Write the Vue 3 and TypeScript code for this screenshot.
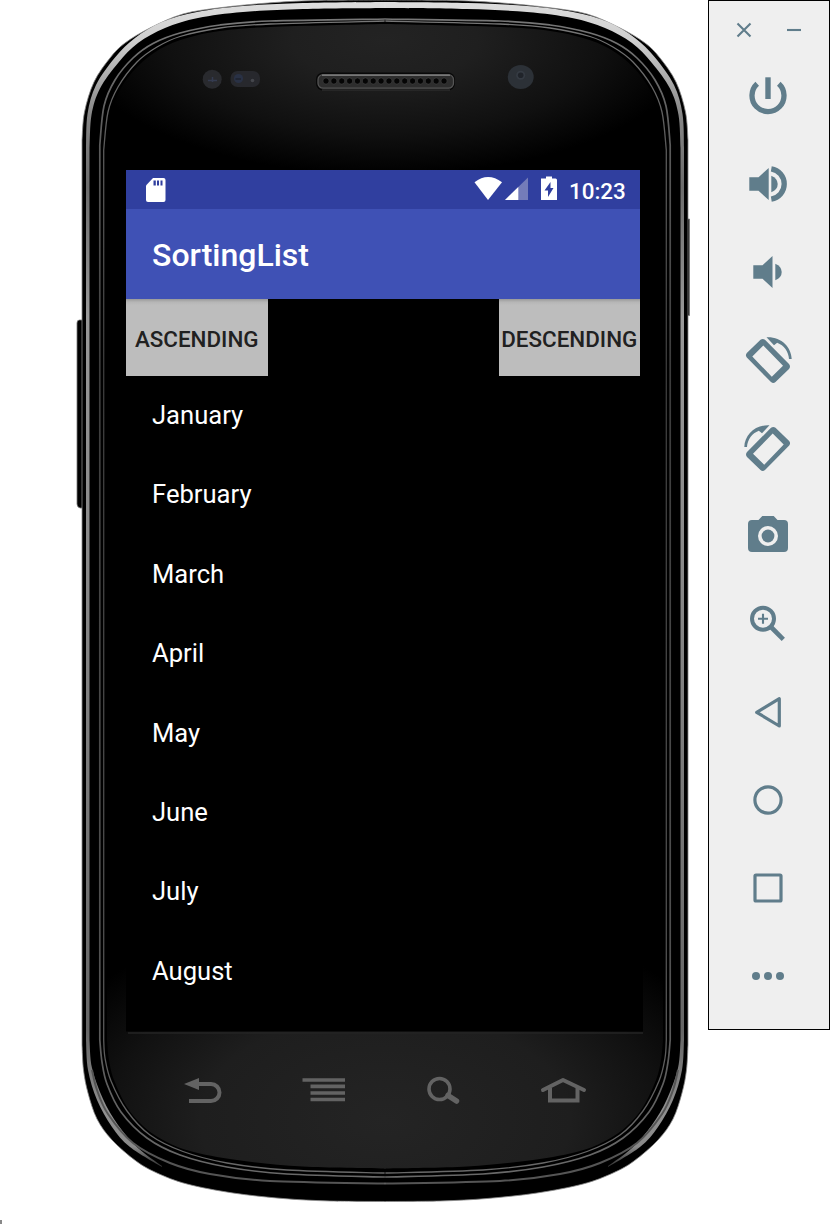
<script setup lang="ts">
type Point = [number, number]

const months: string[] = ['January', 'February', 'March', 'April', 'May', 'June', 'July', 'August']
const holes: number[] = Array.from({ length: 16 }, (_, i) => 326 + i * 7.87)

// Smooth curve through a list of points (Catmull-Rom converted to cubic Béziers).
function segments(points: Point[]): string {
  let d = ''
  for (let i = 0; i < points.length - 1; i++) {
    const p0 = points[Math.max(i - 1, 0)]
    const p1 = points[i]
    const p2 = points[i + 1]
    const p3 = points[Math.min(i + 2, points.length - 1)]
    const c1 = [p1[0] + (p2[0] - p0[0]) / 6, p1[1] + (p2[1] - p0[1]) / 6]
    const c2 = [p2[0] - (p3[0] - p1[0]) / 6, p2[1] - (p3[1] - p1[1]) / 6]
    d += `C${c1.join(' ')} ${c2.join(' ')} ${p2.join(' ')}`
  }
  return d
}
const line = (...runs: Point[][]): string =>
  'M' + runs[0][0].join(' ') + runs.map((r, i) => (i ? `L${r[0].join(' ')}` : '') + segments(r)).join('')

// Each outline describes the left half of the body; the right half is mirrored at x = 385.
const body = line(
  [[386, 0], [315, 0.5], [268, 3], [222, 7.5], [183, 14], [150, 28], [125, 43], [110, 58], [94, 82], [84.5, 112], [82, 140]],
  [[82, 1045], [83.5, 1070], [88, 1093], [97, 1119], [112, 1140], [136, 1161], [157, 1173], [187, 1184], [233, 1193], [283, 1198.5], [330, 1201], [386, 1201.5]],
)
const face = line(
  [[386, 24], [270, 27], [220, 31], [187, 38], [160, 49], [137, 67], [120, 90], [111, 117], [107, 150]],
  [[107, 1040], [109, 1060], [114, 1080], [127, 1107], [143, 1126], [163, 1140], [190, 1151], [237, 1160], [303, 1166.5], [386, 1168.5]],
)
const ringInner = line(
  [[386, 21], [270, 24], [220, 28], [180, 36.5], [157, 47], [137, 62], [118, 87], [108, 112], [103.7, 150]],
  [[103.7, 1040], [105, 1058], [111, 1081], [127, 1111], [150, 1135], [183, 1151.5], [227, 1163], [287, 1170], [386, 1173]],
)
const ringOuter = line(
  [[386, 19], [270, 21], [220, 25], [180, 33], [153, 43.5], [133, 58], [115, 80], [104, 106], [99.8, 145]],
  [[99.8, 1040], [102, 1062], [107, 1084], [121, 1112], [147, 1138], [180, 1155], [227, 1167], [287, 1174], [386, 1177]],
)
const lowerRing = line([[92, 1070], [97, 1090], [108, 1114], [133, 1143], [170, 1163], [210, 1174], [270, 1181], [386, 1183.5]])
const chrome = line(
  [[386, 2], [303, 3], [243, 6], [197, 12], [162, 22], [135, 38], [115, 57.5], [96, 85], [87.5, 114], [86, 148]],
  [[86, 1040], [88, 1070], [97, 1100], [112, 1127], [130, 1147], [162, 1167]],
  [[162, 1166], [138, 1148], [118, 1125], [103, 1099], [92, 1068], [89.5, 1040]],
  [[89.5, 148], [91.5, 115], [100, 88.5], [118.5, 62.5], [138, 43], [165, 28], [198, 18], [243, 12], [303, 9], [386, 8]],
) + 'Z'
</script>

<template>
  <main class="stage">
    <section class="phone">
      <svg class="bezel" width="708" height="1224" viewBox="0 0 708 1224" aria-hidden="true">
        <defs>
          <linearGradient id="chromeFill" gradientUnits="userSpaceOnUse" x1="0" y1="0" x2="0" y2="1170">
            <stop offset="0" stop-color="#dedede" />
            <stop offset=".035" stop-color="#cfcfcf" />
            <stop offset=".1" stop-color="#858585" />
            <stop offset=".16" stop-color="#6c6c6c" />
            <stop offset=".27" stop-color="#999" />
            <stop offset=".6" stop-color="#808080" />
            <stop offset=".88" stop-color="#666" />
            <stop offset=".95" stop-color="#909090" />
            <stop offset=".98" stop-color="#8a8a8a" />
            <stop offset="1" stop-color="#222" />
          </linearGradient>
          <linearGradient id="ringFill" gradientUnits="userSpaceOnUse" x1="0" y1="18" x2="0" y2="1180">
            <stop offset="0" stop-color="#777" />
            <stop offset=".1" stop-color="#5c5c5c" />
            <stop offset=".3" stop-color="#3c3c3c" />
            <stop offset=".8" stop-color="#505050" />
            <stop offset="1" stop-color="#6a6a6a" />
          </linearGradient>
          <radialGradient id="topGlow" gradientUnits="userSpaceOnUse" cx="0" cy="0" r="1" gradientTransform="translate(385 40) scale(310 135)">
            <stop offset="0" stop-color="#232323" />
            <stop offset=".3" stop-color="#1f1f1f" />
            <stop offset=".7" stop-color="#101010" />
            <stop offset="1" stop-color="#000" />
          </radialGradient>
          <radialGradient id="bottomGlow" gradientUnits="userSpaceOnUse" cx="0" cy="0" r="1" gradientTransform="translate(385 1120) scale(370 215)">
            <stop offset="0" stop-color="#242424" />
            <stop offset=".5" stop-color="#1e1e1e" />
            <stop offset=".75" stop-color="#111" />
            <stop offset="1" stop-color="#000" />
          </radialGradient>
          <clipPath id="faceClip">
            <path :d="face" />
            <path :d="face" transform="translate(770) scale(-1 1)" />
          </clipPath>
          <g id="half">
            <path :d="body" fill="#000" stroke="#8a8a8a" stroke-width=".8" />
            <path :d="chrome" fill="url(#chromeFill)" />
            <path :d="ringOuter" fill="#000" stroke="url(#ringFill)" stroke-width="1.7" />
            <path :d="ringInner" fill="#000" stroke="url(#ringFill)" stroke-width="1.3" />
            <path :d="lowerRing" fill="none" stroke="#555" stroke-width="2" />
          </g>
        </defs>
        <path d="M83 320H79.500Q77 320 77 323V504Q77 507 80 508H83Z" fill="#000" stroke="#777" stroke-width=".8" />
        <path d="M687 219H689.500V315.500H687Z" fill="#000" stroke="#777" stroke-width=".8" />
        <use href="#half" />
        <use href="#half" transform="translate(770) scale(-1 1)" />
        <path d="M384 1H386V1201H384Z" fill="#000" />
        <path d="M384 2H386V8H384Z" fill="#dedede" />
        <path d="M384 18.200H386V19.800H384ZM384 20.400H386V21.600H384Z" fill="#747474" />
        <path d="M384 1172.400H386V1173.600H384ZM384 1176.200H386V1177.800H384ZM384 1182.500H386V1184.500H384Z" fill="#606060" />
        <g clip-path="url(#faceClip)">
          <rect x="100" y="20" width="570" height="155" fill="url(#topGlow)" />
          <rect x="100" y="900" width="570" height="275" fill="url(#bottomGlow)" />
        </g>
        <path d="M384 24H386V170H384Z" fill="url(#topGlow)" />
        <path d="M384 1031H386V1168.500H384Z" fill="url(#bottomGlow)" />
        <path d="M126 376H643V1031.500H126Z" fill="#000" />
        <path d="M128 1033H643" stroke="#252525" stroke-width="1.500" />

        <circle cx="212.200" cy="79.300" r="9.500" fill="#292a2e" />
        <path d="M208 80.500H217M212.500 77V82" stroke="#343b50" stroke-width="1.500" />
        <rect x="230.500" y="71" width="29.500" height="16" rx="7" fill="#27282d" />
        <circle cx="238.500" cy="78.500" r="4.600" fill="#293145" />
        <path d="M235.500 79H241" stroke="#1c2029" stroke-width="1.300" />
        <circle cx="252.500" cy="80.500" r="1.800" fill="#44464c" />
        <rect x="316" y="72.500" width="139" height="18" rx="7" fill="#080808" />
        <path d="M322 90H450" stroke="#3c3c3c" stroke-width="1.200" />
        <rect x="318" y="74.700" width="135.500" height="13.500" rx="5" fill="#2d2d2d" stroke="#555" stroke-width="1.300" />
        <path d="M322 75.300H450" stroke="#777" stroke-width="1.600" />
        <circle v-for="x in holes" :key="x" :cx="x" cy="81" r="3.100" fill="#050505" stroke="#444" stroke-width=".6" />
        <ellipse cx="520.700" cy="77" rx="13" ry="12" fill="#2c3137" />
        <circle cx="520.700" cy="75.300" r="4.500" fill="#353b43" />
        <circle cx="520.700" cy="75.300" r="2.800" fill="#20242a" />

        <g fill="none" stroke="#636363" stroke-width="4">
          <path d="M196 1084H211A8.500 8.500 0 0 1 211 1101H189" />
          <path d="M184 1084L199 1078V1090Z" fill="#636363" stroke="none" />
          <path d="M302.500 1080H345M310.500 1086.300H345M310.500 1093H345M310.500 1099.500H345" stroke-width="3.700" />
          <circle cx="439.500" cy="1089" r="10.500" stroke-width="3.600" />
          <path d="M448 1095.500L456.500 1101" stroke-width="5.500" stroke-linecap="round" />
          <path d="M543 1090L563 1080L584 1090" stroke-linecap="round" stroke-linejoin="round" />
          <path d="M550 1088V1100.500H577.500V1088" />
        </g>
      </svg>

      <div class="screen">
        <div class="status">
          <svg class="sd" width="20" height="24" viewBox="0 0 20 24">
            <path d="M7 0H17.500Q19.500 0 19.500 2V22Q19.500 24 17.500 24H2Q0 24 0 22V7.500Z" fill="#fff" />
            <path d="M7.500 2.500V7.500H9.800V2.500ZM11 2.500V7.500H13V2.500ZM14.500 2.500V7.500H16.500V2.500Z" fill="#303f9f" />
          </svg>
          <svg class="indicators" width="84" height="25" viewBox="0 0 84 25">
            <path d="M.5 6.200Q14 -4.200 28 6.200L14 24Z" fill="#fff" />
            <path d="M31 24L54 1.500V24Z" fill="#747cb9" />
            <path d="M31 24L44.300 11V24Z" fill="#fff" />
            <path d="M67 2.500H72V.5H78V2.500H81.500Q83 2.500 83 4V24H67Z" fill="#fff" />
            <path d="M76.500 6L70.500 14.500H74V21L79.500 12H76.500Z" fill="#303f9f" />
          </svg>
          <span class="clock">10:23</span>
        </div>
        <header class="appbar"><h1>SortingList</h1></header>
        <div class="actions">
          <button class="sort"><span>ASCENDING</span></button>
          <button class="sort"><span>DESCENDING</span></button>
        </div>
        <ul class="list">
          <li v-for="month in months" :key="month">{{ month }}</li>
        </ul>
      </div>
    </section>

    <aside class="panel">
      <div class="window-controls">
        <svg width="16" height="16" viewBox="0 0 16 16"><path d="M1.500 1.500L14.500 14.500M14.500 1.500L1.500 14.500" class="line thin" /></svg>
        <svg width="16" height="16" viewBox="0 0 16 16"><path d="M1 8H15" class="line thin" /></svg>
      </div>
      <div class="tools">
        <svg viewBox="0 0 48 48">
          <path d="M13.200 11.800A16 16 0 1 0 34.800 11.800" class="line heavy" />
          <path d="M21.300 5.300H26.700V27H21.300Z" />
        </svg>
        <svg viewBox="0 0 48 48">
          <path d="M5.300 17.300H14.500L24.700 8V40L14.500 30.700H5.300Z" />
          <path d="M27.300 15.700Q33.700 18.500 33.700 24T27.300 32.300Z" />
          <path d="M27.300 8.800A15.400 15.400 0 0 1 27.300 39.200" class="line heavy" />
        </svg>
        <svg viewBox="0 0 48 48">
          <path d="M9.300 17.300H18.500L28.500 8V40L18.500 30.700H9.300Z" />
          <path d="M31.300 15.700Q37.700 18.500 37.700 24T31.300 32.300Z" />
        </svg>
        <svg viewBox="0 0 48 48">
          <g id="rotate">
            <path fill-rule="evenodd" d="M16.500 3.800Q18.700 2 21 3.800L45 28Q47 30.700 45 33L31.500 46Q29.300 48 27 46L2.800 21.500Q1 19.300 2.800 17ZM19.300 9.600L8.300 20.600L27.800 40.700L39 29.700Z" />
            <path d="M22.500 1.300C37 .5 47.300 11 47.700 23H45C44.500 15.500 40 9.500 33.200 6.800L30 9.300Z" />
          </g>
        </svg>
        <svg viewBox="0 0 48 48"><use href="#rotate" transform="translate(48) scale(-1 1)" /></svg>
        <svg viewBox="0 0 48 48">
          <path fill-rule="evenodd" d="M18.300 4H29.700L33.500 8H40Q44 8 44 12V36Q44 40 40 40H8Q4 40 4 36V12Q4 8 8 8H14.500ZM24 14A10 10 0 1 0 24 34A10 10 0 1 0 24 14Z" />
          <circle cx="24" cy="24" r="6.400" />
        </svg>
        <svg viewBox="0 0 48 48">
          <circle cx="19" cy="18.700" r="11" class="line" stroke-width="4" />
          <path d="M14 18.700H24M19 13.700V23.700" class="line thin" />
          <path d="M26.500 26.500L39.300 39.300" class="line" stroke-width="4.600" />
        </svg>
        <svg viewBox="0 0 48 48"><path d="M12.700 24.300L35.300 10.700V38Z" class="line nav" /></svg>
        <svg viewBox="0 0 48 48"><circle cx="24" cy="24" r="13.100" class="line nav" /></svg>
        <svg viewBox="0 0 48 48"><rect x="11" y="11" width="26" height="26" rx="1" class="line nav" /></svg>
        <svg viewBox="0 0 48 48"><circle cx="12" cy="24" r="4" /><circle cx="24" cy="24" r="4" /><circle cx="36" cy="24" r="4" /></svg>
      </div>
    </aside>
    <i class="caret"></i>
  </main>
</template>

<style>
html,
body {
  background: #fff;
}
</style>

<style scoped>
.stage {
  position: relative;
  display: flex;
  align-items: flex-start;
  width: 830px;
  height: 1224px;
  overflow: hidden;
  font-family: Roboto, "Liberation Sans", sans-serif;
}
.phone {
  position: relative;
  box-sizing: border-box;
  width: 708px;
  height: 1224px;
  padding: 170px 0 0 126px;
}
.bezel {
  position: absolute;
  inset: 0;
}
.screen {
  position: relative;
  width: 514px;
  color: #fff;
}
.status {
  box-sizing: border-box;
  display: flex;
  align-items: center;
  height: 39px;
  padding: 0 13px 0 19.5px;
  background: #303f9f;
}
.indicators {
  margin: -3px 11px 0 auto;
}
.clock {
  width: 58px;
  padding-top: 2px;
  font-size: 22.4px;
  font-weight: 500;
  line-height: 26px;
  white-space: nowrap;
}
.appbar {
  position: relative;
  display: flex;
  align-items: center;
  height: 89.5px;
  padding-left: 26px;
  background: #3f51b5;
}
h1 {
  margin: 3px 0 0;
  font-size: 32px;
  font-weight: 500;
  line-height: 38px;
}
.actions {
  display: flex;
  justify-content: space-between;
  height: 77.5px;
  background: #000;
}
.sort {
  display: flex;
  align-items: center;
  justify-content: center;
  width: 141.5px;
  height: 77.5px;
  padding: 3px 0 0;
  border: 0;
  background: linear-gradient(#999 0, #b5b5b5 3px, #bdbdbd 6px);
  color: #212121;
  font: 500 22.4px/26px Roboto, sans-serif;
  white-space: nowrap;
}
.list {
  margin: 0;
  padding: 0;
  list-style: none;
}
.list li {
  height: 79.4px;
  padding-left: 26px;
  font-size: 25.6px;
  line-height: 79.4px;
}
.panel {
  box-sizing: border-box;
  width: 122px;
  height: 1030px;
  border: 1px solid #000;
  background: #efefef;
}
.window-controls {
  display: flex;
  gap: 34px;
  height: 29px;
  padding: 21px 0 0 27px;
}
.tools {
  display: grid;
  grid-auto-rows: 88px;
  place-items: center;
  padding-right: 2px;
  margin-top: 1px;
}
.tools svg {
  width: 48px;
  height: 48px;
  overflow: visible;
  fill: #607d8b;
}
.line {
  fill: none;
  stroke: #607d8b;
}
.thin {
  stroke-width: 2.1;
}
.heavy {
  stroke-width: 5.3;
}
.nav {
  stroke-width: 3.2;
  stroke-linejoin: round;
}
.caret {
  position: absolute;
  left: 0;
  top: 1220px;
  width: 2px;
  height: 4px;
  background: #888;
}
</style>
